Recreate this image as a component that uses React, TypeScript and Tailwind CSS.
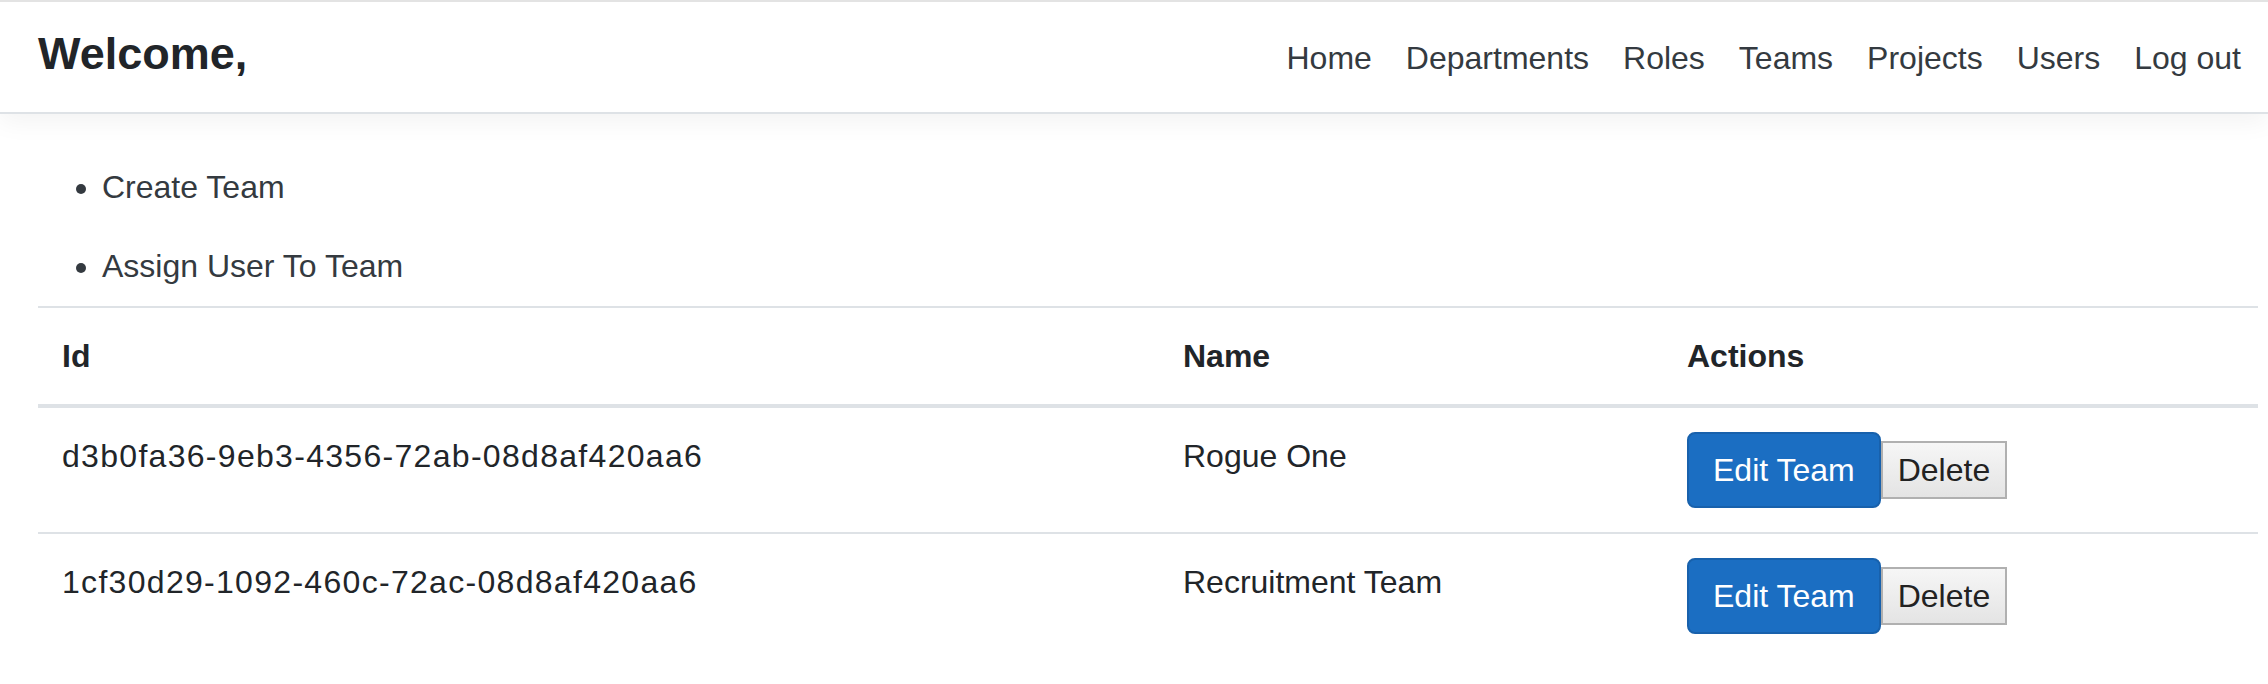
const navLinks = ['Home', 'Departments', 'Roles', 'Teams', 'Projects', 'Users', 'Log out'];

const teams = [
  { id: 'd3b0fa36-9eb3-4356-72ab-08d8af420aa6', name: 'Rogue One' },
  { id: '1cf30d29-1092-460c-72ac-08d8af420aa6', name: 'Recruitment Team' },
];

const cols = 'grid grid-cols-[1121px_504px_1fr]';

function TeamRow({ id, name }: { id: string; name: string }) {
  return (
    <div className={`${cols} border-t-2 border-[#dee2e6] text-[#212529]`}>
      <div className="px-6 py-6 tracking-[1.3px]">{id}</div>
      <div className="px-6 py-6">{name}</div>
      <div className="px-6 py-6">
        <div className="flex items-baseline">
          <button className="rounded-[8px] border-2 border-[#1861ac] bg-[#1b6ec2] px-[24px] py-[12px] leading-[48px] text-white">
            Edit Team
          </button>
          <button className="border-2 border-[#b0b0b0] bg-gradient-to-b from-[#f6f6f6] to-[#e4e4e4] px-[15px] py-[3px] leading-[48px] text-[#222]">
            Delete
          </button>
        </div>
      </div>
    </div>
  );
}

export default function App() {
  return (
    <div className="min-h-[684px] bg-white font-['Liberation_Sans',Arial,sans-serif] text-[32px] leading-[48px]">
      <header className="flex h-[114px] items-center border-t-2 border-b-2 border-t-[#e3e3e3] border-b-[#dee2e6] bg-white pb-[3px] pl-[38px] pr-[10px] shadow-[0_8px_24px_rgba(0,0,0,0.05)]">
        <div className="flex w-full items-baseline justify-between">
          <span className="text-[45px] font-bold text-[#212529]">Welcome,</span>
          <nav className="flex items-baseline">
            {navLinks.map((link) => (
              <a key={link} href="#" className="px-[17px] text-[#343a40]">
                {link}
              </a>
            ))}
          </nav>
        </div>
      </header>

      <main className="pl-[38px] pr-[10px] pt-[49px]">
        <ul className="mb-4 list-disc pl-[64px] text-[#343a40]">
          <li className="mb-[31px]">
            <a href="#">Create Team</a>
          </li>
          <li>
            <a href="#">Assign User To Team</a>
          </li>
        </ul>

        <div>
          <div className={`${cols} border-t-2 border-b-4 border-[#dee2e6] font-bold text-[#212529]`}>
            <div className="px-6 py-6">Id</div>
            <div className="px-6 py-6">Name</div>
            <div className="px-6 py-6">Actions</div>
          </div>
          {teams.map((t, i) => (
            <div key={t.id} className={i === 0 ? '-mt-[2px]' : ''}>
              <TeamRow id={t.id} name={t.name} />
            </div>
          ))}
        </div>
      </main>
    </div>
  );
}
